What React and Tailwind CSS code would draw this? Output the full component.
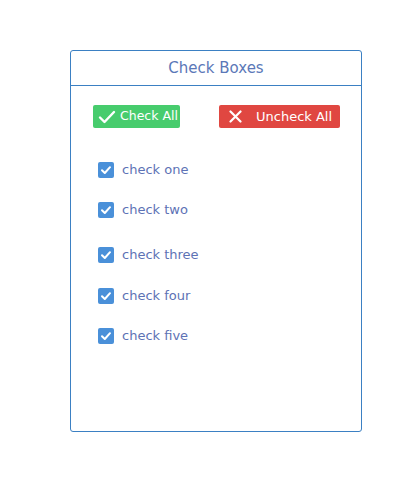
import React, { useState } from "react";

const items = ["check one", "check two", "check three", "check four", "check five"];
const offsets = ["mt-[34px]", "mt-[24px]", "mt-[29px]", "mt-[25px]", "mt-[24px]"];

function Box({ checked }) {
  return (
    <span
      className={
        "flex h-[16px] w-[16px] items-center justify-center rounded-[2px] " +
        (checked ? "bg-[#4a90d9]" : "border border-[#9ab] bg-white")
      }
    >
      {checked && (
        <svg width="12" height="12" viewBox="0 0 12 12" fill="none">
          <path d="M2 6.2 L4.8 9 L10 3.2" stroke="white" strokeWidth="2" strokeLinecap="round" strokeLinejoin="round" />
        </svg>
      )}
    </span>
  );
}

export default function App() {
  const [checked, setChecked] = useState(items.map(() => true));

  return (
    <div className="min-h-[500px] bg-white pt-[50px] font-['DejaVu_Sans',sans-serif]">
      <div className="ml-[70px] flex h-[382px] w-[292px] flex-col rounded-[3px] border border-[#3b80c3]">
        <div className="flex h-[35px] items-center justify-center border-b border-[#3b80c3] text-[15px] text-[#5b78b8]">
          Check Boxes
        </div>
        <div className="flex justify-between pl-[22px] pr-[21px] pt-[19px]">
          <button
            onClick={() => setChecked(items.map(() => true))}
            className="flex h-[23px] w-[87px] items-center gap-[4px] whitespace-nowrap rounded-[2px] bg-[#47cc6d] pl-[5px] text-[12.5px] text-white"
          >
            <svg width="18" height="14" viewBox="0 0 18 14" fill="none">
              <path d="M2 7.5 L6.5 12 L16 2" stroke="white" strokeWidth="2.4" strokeLinecap="round" strokeLinejoin="round" />
            </svg>
            Check All
          </button>
          <button
            onClick={() => setChecked(items.map(() => false))}
            className="flex h-[23px] w-[121px] items-center gap-[14px] whitespace-nowrap rounded-[2px] bg-[#e04741] pl-[10px] text-[13px] text-white"
          >
            <svg width="13" height="13" viewBox="0 0 13 13" fill="none">
              <path d="M1.5 1.5 L11.5 11.5 M11.5 1.5 L1.5 11.5" stroke="white" strokeWidth="2.2" strokeLinecap="round" />
            </svg>
            Uncheck All
          </button>
        </div>
        <div className="flex flex-col pl-[27px]">
          {items.map((label, i) => (
            <label
              key={label}
              className={"flex h-[16px] cursor-pointer items-center gap-[8px] text-[13px] text-[#5d72b5] " + offsets[i]}
              onClick={() => setChecked(checked.map((c, j) => (j === i ? !c : c)))}
            >
              <Box checked={checked[i]} />
              {label}
            </label>
          ))}
        </div>
      </div>
    </div>
  );
}
